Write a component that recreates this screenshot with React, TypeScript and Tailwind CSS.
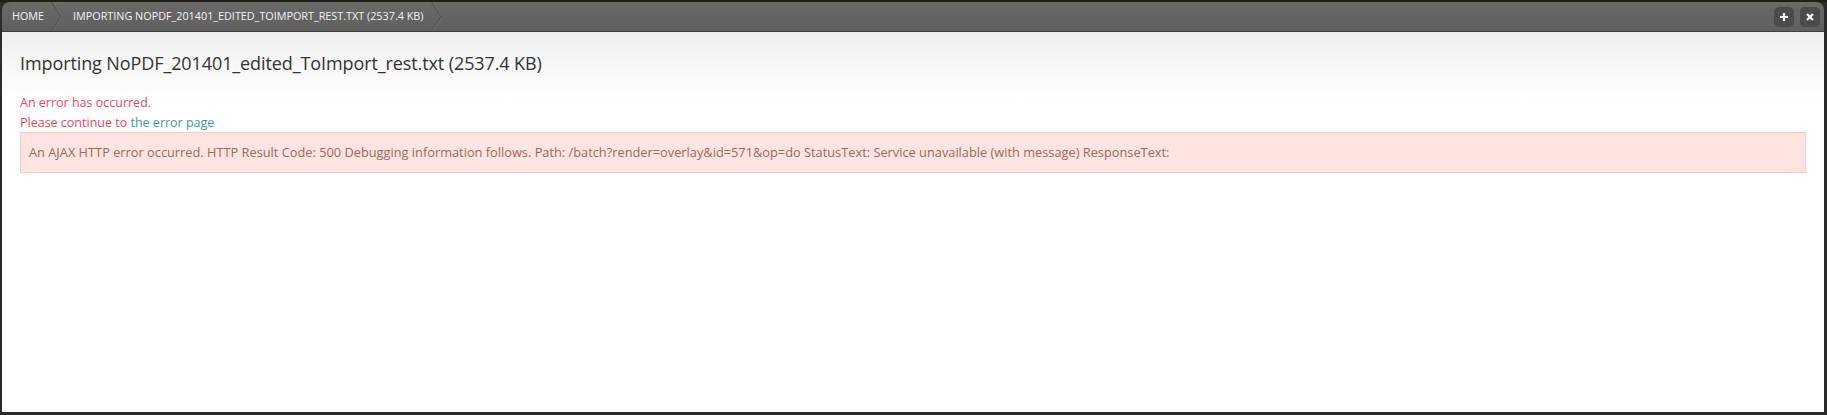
import React from "react";

const crumbs = ["Home", "Importing NoPDF_201401_edited_ToImport_rest.txt (2537.4 KB)"];

function Chevron() {
  return (
    <svg width="11" height="29" viewBox="0 0 11 29" className="shrink-0">
      <path d="M0.5 0 L10 14.5 L0.5 29" fill="none" stroke="#545454" strokeWidth="1.2" />
      <path d="M1.8 0 L11 14.5 L1.8 29" fill="none" stroke="#7a7a7a" strokeWidth="0.8" opacity="0.6" />
    </svg>
  );
}

export default function App() {
  const font = { fontFamily: "'Open Sans', 'DejaVu Sans', sans-serif" };
  return (
    <div className="w-[1827px] h-[415px] bg-[#2b2b2b] flex flex-col" style={font}>
      <div className="h-[2px] bg-[#1c2019]" />
      <div className="flex-1 flex flex-col ml-[2px] mr-[3px] mb-[3px]">
        {/* top bar */}
        <div className="h-[30px] rounded-t-[8px] bg-gradient-to-b from-[#6a6a6a] to-[#5f5f5f] border-b border-[#3e3e3e] flex items-center">
          {crumbs.map((c, i) => (
            <div key={i} className="flex items-center h-full">
              <span className={`uppercase text-[10.8px] text-[#f2f2f2] ${i === 0 ? "pl-[10px] pr-[7px]" : "pl-[11px] pr-[8px]"}`}>
                {c}
              </span>
              <Chevron />
            </div>
          ))}
          <div className="ml-auto flex items-center gap-[6px] pr-[4px]">
            <button className="w-[20px] h-[20px] rounded-[5px] bg-[#4b4b4b] flex items-center justify-center">
              <svg width="10" height="10" viewBox="0 0 10 10">
                <path d="M5 1 V9 M1 5 H9" stroke="#fff" strokeWidth="2.2" />
              </svg>
            </button>
            <button className="w-[20px] h-[20px] rounded-[5px] bg-[#4b4b4b] flex items-center justify-center">
              <svg width="10" height="10" viewBox="0 0 10 10">
                <path d="M2 2 L8 8 M8 2 L2 8" stroke="#fff" strokeWidth="2.2" />
              </svg>
            </button>
          </div>
        </div>
        {/* content */}
        <div className="flex-1 bg-gradient-to-b from-[#efefef] via-white to-white via-[18%] px-[18px]">
          <h1 className="text-[18px] text-[#333] pt-[18px] leading-[26px] tracking-[-0.1px]">
            Importing NoPDF_201401_edited_ToImport_rest.txt (2537.4 KB)
          </h1>
          <div className="mt-[17px] text-[12.5px] leading-[20px] text-[#ea4a55]">
            <div>An error has occurred.</div>
            <div>
              Please continue to <a className="text-[#3f97a8]">the error page</a>
            </div>
          </div>
          <div className="h-[41px] -mt-[1px] bg-[#ffe4e1] border border-[#fccdc8] flex items-center px-[8px] text-[12.8px] text-[#a0675a]">
            An AJAX HTTP error occurred. HTTP Result Code: 500 Debugging information follows. Path: /batch?render=overlay&amp;id=571&amp;op=do StatusText: Service unavailable (with message) ResponseText:
          </div>
        </div>
      </div>
    </div>
  );
}
